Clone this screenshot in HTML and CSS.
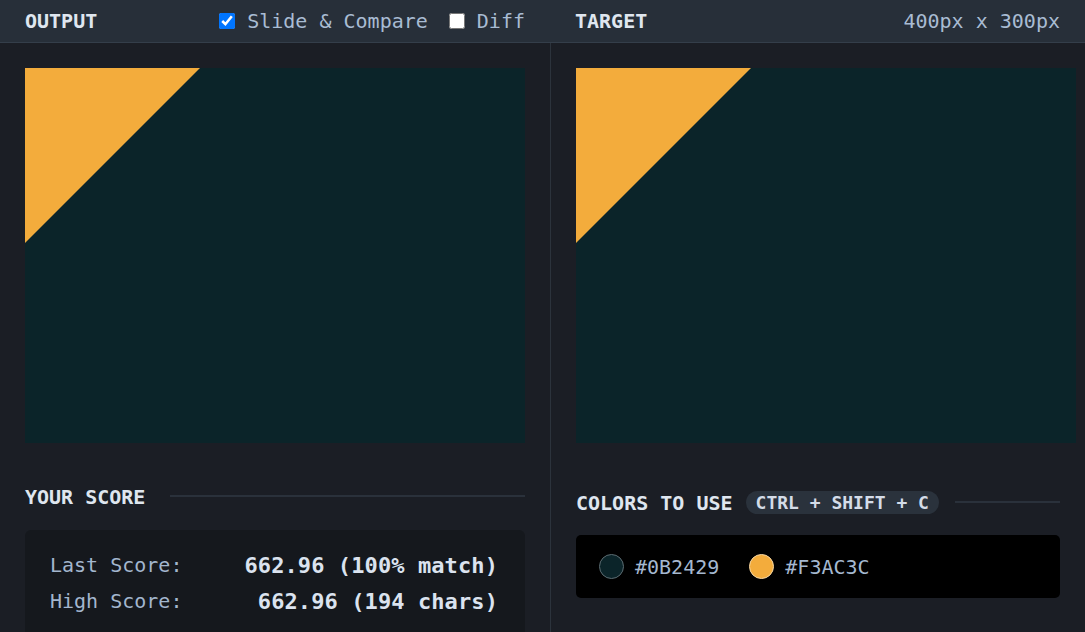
FILE: index.html
```html
<!DOCTYPE html>
<html>
<head>
<meta charset="utf-8">
<link rel="stylesheet" href="styles.css">
</head>
<body>
<div class="app">
  <section class="panel panel-left">
    <header class="bar">
      <h2 class="title">OUTPUT</h2>
      <div class="controls">
        <label class="check"><input type="checkbox" checked><span>Slide &amp; Compare</span></label>
        <label class="check"><input type="checkbox"><span>Diff</span></label>
      </div>
    </header>
    <div class="body">
      <div class="canvas">
        <svg viewBox="0 0 400 300" width="500" height="375"><rect width="400" height="300" fill="#0B2429"/><polygon points="0,0 140,0 0,140" fill="#F3AC3C"/></svg>
      </div>
      <div class="section-head score-head">
        <h3 class="title">YOUR SCORE</h3>
        <div class="rule rule-wide"></div>
      </div>
      <div class="score-box">
        <div class="score-row"><span class="label">Last Score:</span><span class="value">662.96 (100% match)</span></div>
        <div class="score-row"><span class="label">High Score:</span><span class="value">662.96 (194 chars)</span></div>
      </div>
    </div>
  </section>
  <section class="panel panel-right">
    <header class="bar">
      <h2 class="title">TARGET</h2>
      <span class="dims">400px x 300px</span>
    </header>
    <div class="body">
      <div class="canvas">
        <svg viewBox="0 0 400 300" width="500" height="375"><rect width="400" height="300" fill="#0B2429"/><polygon points="0,0 140,0 0,140" fill="#F3AC3C"/></svg>
      </div>
      <div class="section-head colors-head">
        <h3 class="title">COLORS TO USE</h3>
        <span class="pill">CTRL + SHIFT + C</span>
        <div class="rule rule-narrow"></div>
      </div>
      <div class="colors-box">
        <div class="swatch"><span class="dot dot-dark"></span><span class="hex">#0B2429</span></div>
        <div class="swatch"><span class="dot dot-orange"></span><span class="hex">#F3AC3C</span></div>
      </div>
    </div>
  </section>
</div>
</body>
</html>
```
FILE: styles.css
```css
* { box-sizing: border-box; }
html, body { margin: 0; padding: 0; }
body {
  background: #1b1e25;
  font-family: "DejaVu Sans Mono", "Liberation Mono", monospace;
  color: #a5b8d0;
  width: 1085px;
  height: 632px;
  overflow: hidden;
}
.app {
  display: grid;
  grid-template-columns: 550px 1fr;
  height: 632px;
}
.panel { display: flex; flex-direction: column; min-width: 0; }
.bar {
  height: 43px;
  background: #272f39;
  border-bottom: 1px solid #343e4a;
  display: flex;
  align-items: center;
  justify-content: space-between;
  padding: 0 25px;
  flex-shrink: 0;
}
.title {
  margin: 0;
  font-size: 20px;
  font-weight: bold;
  color: #dfe6ef;
  line-height: 24px;
}
.controls { display: flex; align-items: center; gap: 21px; }
.check { display: flex; align-items: center; gap: 12px; font-size: 20px; color: #a9bcd3; }
.check input { margin: 0; width: 16px; height: 16px; }
.dims { font-size: 20px; color: #a9bcd3; }
.body { flex: 1; padding: 25px 25px 0; }
.panel-right .body { border-left: 1px solid #2c333c; }
.canvas { width: 500px; height: 375px; }
.canvas svg { display: block; }
.section-head { display: flex; align-items: center; }
.score-head { margin-top: 42px; }
.colors-head { margin-top: 48px; height: 23px; }
.rule { flex: 1; height: 2px; background: #2a313b; }
.rule-wide { margin-left: 25px; margin-top: -2px; }
.rule-narrow { margin-left: 16px; margin-top: -2px; }
.pill {
  margin-left: 13px;
  height: 23px;
  line-height: 23px;
  padding: 0 10px;
  border-radius: 12px;
  background: #2a323c;
  color: #d4dce8;
  font-weight: bold;
  font-size: 18px;
}
.score-box {
  margin-top: 21px;
  background: #15181d;
  border-radius: 6px;
  padding: 17px 27px 20px 25px;
}
.score-row {
  display: flex;
  justify-content: space-between;
  align-items: center;
  height: 36px;
}
.label { font-size: 20px; color: #a3b6ce; }
.value { font-size: 22px; font-weight: bold; color: #dbe3ef; letter-spacing: 0.1px; }
.colors-box {
  margin-top: 21px;
  width: 484px;
  height: 63px;
  background: #000;
  border-radius: 5px;
  display: flex;
  align-items: center;
  padding-left: 23px;
  gap: 30px;
}
.swatch { display: flex; align-items: center; gap: 11px; }
.dot { width: 25px; height: 25px; border-radius: 50%; }
.dot-dark { background: #0B2429; border: 1px solid #5c6c72; }
.dot-orange { background: #F3AC3C; border: 1px solid #f6d7a4; }
.hex { font-size: 20px; color: #a5b8d0; }
```
